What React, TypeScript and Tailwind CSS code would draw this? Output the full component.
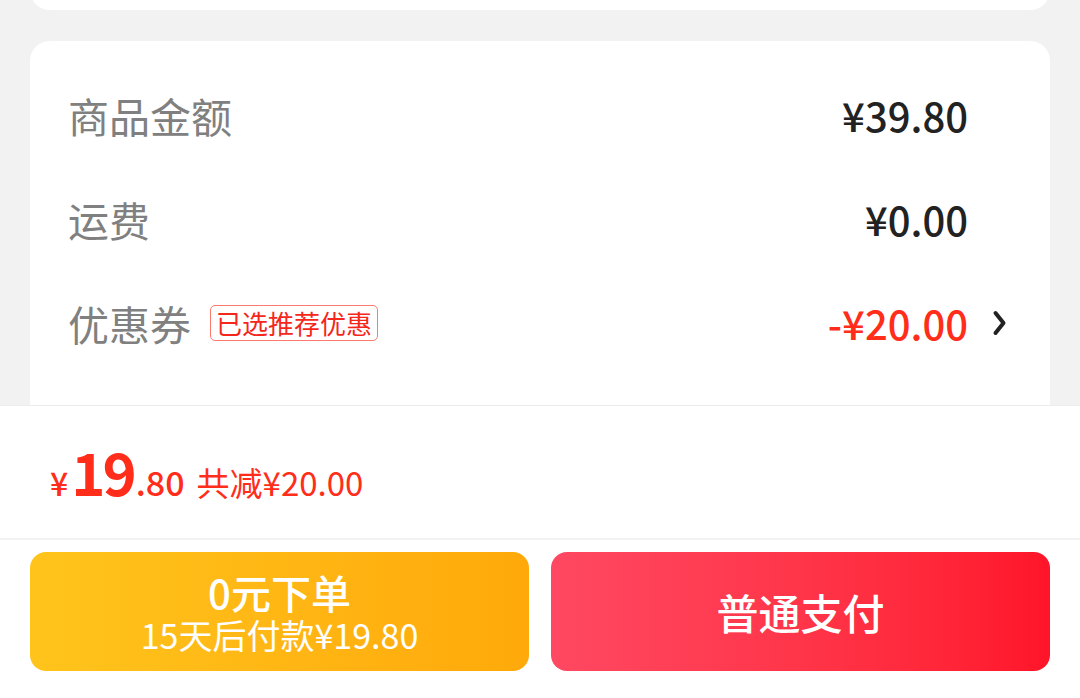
export default function App() {
  const font = { fontFamily: '"Noto Sans CJK SC", "Noto Sans", sans-serif' };

  return (
    <div style={font} className="w-[1080px] h-[698px] bg-[#f2f2f2] flex flex-col overflow-hidden">
      {/* Content */}
      <div className="flex-1 overflow-hidden px-[30px]">
        {/* Previous card (bottom edge) */}
        <div className="h-[10px] overflow-hidden">
          <div className="h-[40px] -mt-[30px] bg-white rounded-[20px]" />
        </div>

        {/* Amount card */}
        <div className="mt-[31px] bg-white rounded-t-[20px] pt-[22px] px-[38px] pb-[40px]">
          <div className="h-[104px] flex items-center">
            <span className="text-[41px] leading-none text-[#808080]">商品金额</span>
            <span className="ml-auto text-[40px] leading-none font-medium text-[#222]">¥39.80</span>
            <span className="w-[44px]" />
          </div>
          <div className="h-[104px] flex items-center">
            <span className="text-[41px] leading-none text-[#808080]">运费</span>
            <span className="ml-auto text-[40px] leading-none font-medium text-[#222]">¥0.00</span>
            <span className="w-[44px]" />
          </div>
          <div className="h-[104px] flex items-center">
            <span className="text-[41px] leading-none text-[#808080]">优惠券</span>
            <span className="ml-[19px] h-[36px] px-[5px] flex items-center border border-[#ff7a6e] rounded-[5px] text-[26px] leading-none text-[#f5261a]">
              已选推荐优惠
            </span>
            <span className="ml-auto text-[40px] leading-none font-medium text-[#ff2d1a]">-¥20.00</span>
            <span className="w-[44px] flex justify-end pr-[5px]">
              <svg width="15" height="26" viewBox="0 0 15 26" fill="none">
                <path d="M3.5 3 L11.5 13 L3.5 23" stroke="#222" strokeWidth="4" strokeLinecap="round" strokeLinejoin="round" />
              </svg>
            </span>
          </div>
        </div>
      </div>

      {/* Bottom bar */}
      <div className="h-[293px] bg-white border-t border-[#ececec] flex flex-col">
        <div className="h-[134px] flex items-center pl-[50px] text-[#ff2d1a] border-b-2 border-[#f2f2f2]">
          <div className="flex items-baseline leading-none -mt-[3px]">
            <span className="text-[32px] font-medium">¥</span>
            <span className="text-[58px] font-bold ml-[3px] tracking-[-3px]">19</span>
            <span className="text-[34px] font-medium ml-[2px]">.80</span>
            <span className="text-[33px] ml-[12px]">共减¥20.00</span>
          </div>
        </div>
        <div className="flex gap-[22px] px-[30px] pt-[12px]">
          <button className="w-[499px] h-[119px] rounded-[16px] bg-gradient-to-r from-[#ffc41c] to-[#ffa90a] text-white flex flex-col items-center justify-center gap-[8px]">
            <span className="text-[40px] leading-[38px] font-medium">0元下单</span>
            <span className="text-[34px] leading-[32px]">15天后付款¥19.80</span>
          </button>
          <button className="w-[499px] h-[119px] rounded-[16px] bg-gradient-to-r from-[#ff4862] to-[#ff1429] text-white flex items-center justify-center">
            <span className="text-[42px] leading-none font-medium">普通支付</span>
          </button>
        </div>
      </div>
    </div>
  );
}
